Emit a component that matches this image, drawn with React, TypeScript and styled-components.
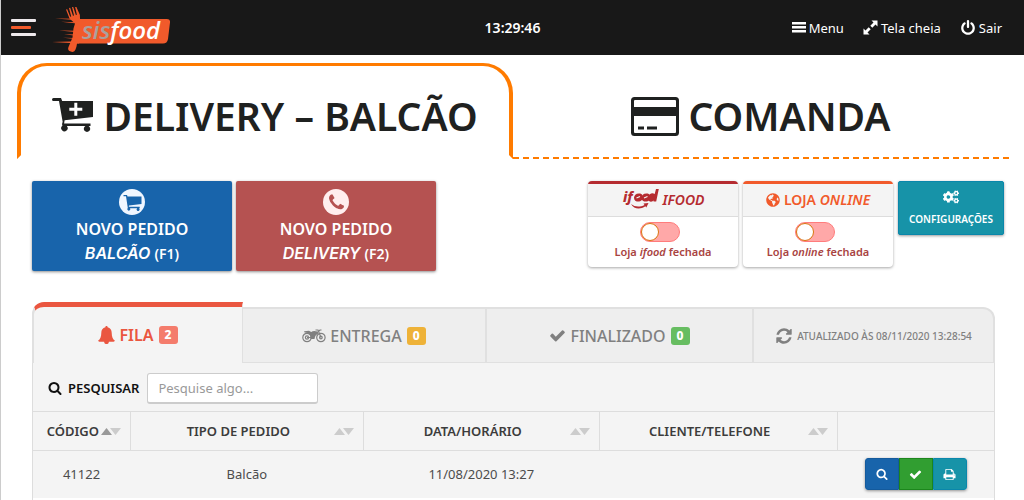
import React, { ReactNode } from "react";
import styled, { createGlobalStyle, css } from "styled-components";
import { FaCogs, FaGlobeAmericas } from "react-icons/fa";

const GlobalStyle = createGlobalStyle`
  *, *::before, *::after { box-sizing: border-box; }
  body {
    margin: 0;
    background: #fff;
    color: #444;
    font-family: "Noto Sans", "Open Sans", sans-serif;
    font-size: 13px;
    line-height: 20px;
  }
  button, input { font: inherit; }
  a { color: inherit; text-decoration: none; }
`;

/* ---------- icons ---------- */

const Glyph = styled.svg<{ $w: number; $h?: number }>`
  width: ${(p) => p.$w}px;
  height: ${(p) => p.$h ?? p.$w}px;
  flex: none;
  fill: currentColor;
`;

const paths = {
  check:
    "M1671 566q0 40-28 68l-724 724-136 136q-28 28-68 28t-68-28l-136-136-362-362q-28-28-28-68t28-68l136-136q28-28 68-28t68 28l294 295 656-657q28-28 68-28t68 28l136 136q28 28 28 68z",
  search:
    "M1216 832q0-185-131.5-316.5t-316.5-131.5-316.5 131.5-131.5 316.5 131.5 316.5 316.5 131.5 316.5-131.5 131.5-316.5zm512 832q0 52-38 90t-90 38q-54 0-90-38l-343-342q-179 124-399 124-143 0-273.5-55.5t-225-150-150-225-55.5-273.5 55.5-273.5 150-225 225-150 273.5-55.5 273.5 55.5 225 150 150 225 55.5 273.5q0 220-124 399l343 343q37 37 37 90z",
  refresh:
    "M1639 1056q0 5-1 7-64 268-268 434.5t-478 166.5q-146 0-282.5-55t-243.5-157l-129 129q-19 19-45 19t-45-19-19-45v-448q0-26 19-45t45-19h448q26 0 45 19t19 45-19 45l-137 137q71 66 161 102t187 36q134 0 250-65t186-179q11-17 53-117 8-23 30-23h192q13 0 22.5 9.5t9.5 22.5zm25-800v448q0 26-19 45t-45 19h-448q-26 0-45-19t-19-45 19-45l138-138q-148-137-349-137-134 0-250 65t-186 179q-11 17-53 117-8 23-30 23h-199q-13 0-22.5-9.5t-9.5-22.5v-7q65-268 270-434.5t480-166.5q146 0 284 55.5t245 156.5l130-129q19-19 45-19t45 19 19 45z",
  power:
    "M1664 896q0 156-61 298t-164 245-245 164-298 61-298-61-245-164-164-245-61-298q0-182 80.5-343t226.5-270q43-32 95.5-25t83.5 50q32 42 24.5 94.5t-49.5 84.5q-98 74-151.5 181t-53.5 228q0 104 40.5 198.5t109.5 163.5 163.5 109.5 198.5 40.5 198.5-40.5 163.5-109.5 109.5-163.5 40.5-198.5q0-121-53.5-228t-151.5-181q-42-32-49.5-84.5t24.5-94.5q31-43 84-50t95 25q146 109 226.5 270t80.5 343zm-640-768v640q0 52-38 90t-90 38-90-38-38-90v-640q0-52 38-90t90-38 90 38 38 90z",
  print:
    "M448 1536h896v-256h-896v256zm0-640h896v-384h-160q-40 0-68-28t-28-68v-160h-640v640zm1152 64q0-26-19-45t-45-19-45 19-19 45 19 45 45 19 45-19 19-45zm128 0v416q0 13-9.5 22.5t-22.5 9.5h-224v160q0 40-28 68t-68 28h-960q-40 0-68-28t-28-68v-160h-224q-13 0-22.5-9.5t-9.5-22.5v-416q0-79 56.5-135.5t135.5-56.5h64v-544q0-40 28-68t68-28h672q40 0 88 20t76 48l152 152q28 28 48 76t20 88v256h64q79 0 135.5 56.5t56.5 135.5z",
  phone:
    "M1600 1240q0 27-10 70.5t-21 68.5q-21 50-122 106-94 51-186 51-27 0-53-3.5t-57.5-12.5-47-14.5-55.5-20.5-49-18q-98-35-175-83-127-79-264-216t-216-264q-48-77-83-175-3-9-18-49t-20.5-55.5-14.5-47-12.5-57.5-3.5-53q0-92 51-186 56-101 106-122 25-11 68.5-21t70.5-10q14 0 21 3 18 6 53 76 11 19 30 54t35 63.5 31 53.5q3 4 17.5 25t21.5 35.5 7 28.5q0 20-28.5 50t-62 55-62 53-28.5 46q0 9 5 22.5t8.5 20.5 14 24 11.5 19q76 137 174 235t235 174q2 1 19 11.5t24 14 20.5 8.5 22.5 5q18 0 46-28.5t53-62 55-62 50-28.5q14 0 28.5 7t35.5 21.5 25 17.5q25 15 53.5 31t63.5 35 54 30q70 35 76 53 3 7 3 21z",
};

const Icon = ({ name, size }: { name: keyof typeof paths; size: number }) => (
  <Glyph $w={size} viewBox="0 0 1792 1792" aria-hidden="true">
    <path d={paths[name]} />
  </Glyph>
);

const BarsIcon = () => (
  <Glyph $w={14} viewBox="0 0 14 14" aria-hidden="true">
    <path d="M0 1h14v2.500H0zM0 5h14v2.500H0zM0 9h14v2.500H0z" />
  </Glyph>
);

const ExpandIcon = () => (
  <Glyph $w={15} viewBox="0 0 15 15" aria-hidden="true">
    <path d="M8.500 0.500h6v6l-2-2-3.200 3.200-2-2 3.200-3.200zM6.500 14.500H0.500V8.500l2 2 3.200-3.200 2 2-3.200 3.200z" />
  </Glyph>
);

const BellIcon = () => (
  <Glyph $w={17} $h={18} viewBox="0 0 17 18" aria-hidden="true">
    <path d="M8.500 0c.7 0 1.100.5 1.100 1.300C12.300 1.900 13.700 4 13.700 6.700c0 4.300 1.200 6.500 3.100 7.800 0 .7-.5 1.200-1.200 1.200h-4.700a2.400 2.400 0 0 1-4.800 0H1.400c-.7 0-1.200-.5-1.200-1.200 1.900-1.300 3.100-3.500 3.100-7.800C3.300 4 4.700 1.900 7.400 1.300 7.400.5 7.800 0 8.500 0z" />
  </Glyph>
);

const MotorcycleIcon = () => (
  <Glyph $w={24} $h={14} viewBox="0 0 24 14" aria-hidden="true">
    <g fill="none" stroke="currentColor" strokeWidth="1.200">
      <circle cx="5" cy="8.500" r="4.200" />
      <circle cx="5" cy="8.500" r="1.600" />
      <circle cx="18.900" cy="8.500" r="4.200" />
      <circle cx="18.900" cy="8.500" r="1.300" />
      <path d="M13.500 1h2.500l3 7.500M16.500 2.500l1.500-1.500h1.500M5 8.500h6.500c0-3 1-4.500 4.500-5.500" />
    </g>
    <path d="M2 2.200l5-.4 2.200 1.200c1.500-1.200 3.300-1.600 6.300-.4l.9 1.900c-2.500 1-3.400 2.700-3.900 5.500H8.600C8.800 7 7.800 4.800 5.600 4.100L2.600 3.400z" />
  </Glyph>
);

const CartPlusIcon = () => (
  <Glyph $w={42} $h={36} viewBox="0 0 42 36" aria-hidden="true">
    <path
      fillRule="evenodd"
      d="M1.500 0H9l1.200 3H41v16L12.600 22.300l-.5 3.200H38.500V28H36.600a3.200 3.200 0 1 1-3.200 0H14.800a3.200 3.200 0 1 1-4.400-.3c-.5-1.200-.3-2.500.3-3.600L7 3H1.500a1.500 1.500 0 0 1 0-3zM22.300 4.700v5h-5v3h5v5h3v-5h5v-3h-5v-5z"
    />
  </Glyph>
);

const CardIcon = () => (
  <Glyph $w={48} $h={39} viewBox="0 0 48 39" aria-hidden="true">
    <path
      fillRule="evenodd"
      d="M3.500 0h41A3.500 3.500 0 0 1 48 3.500v32a3.500 3.500 0 0 1-3.500 3.500h-41A3.500 3.500 0 0 1 0 35.500v-32A3.500 3.500 0 0 1 3.500 0zM4 3a1 1 0 0 0-1 1v6h42V4a1 1 0 0 0-1-1zM3 19v16a1 1 0 0 0 1 1h40a1 1 0 0 0 1-1V19zM7 29.500h6v3H7zM16 29.500h10v3H16z"
    />
  </Glyph>
);

const CartDisc = () => (
  <Glyph $w={26} viewBox="0 0 26 26" aria-hidden="true">
    <circle cx="13" cy="13" r="13" fill="#f0f6ff" />
    <path
      fill="#1864ab"
      d="M4.500 6H8l.5 1.500h14V15L10 16.500l-.2 1.300H20.700V19.200H20a1.500 1.500 0 1 1-1.800 0H11a1.500 1.500 0 1 1-2.200-.2L7 7.300H4.500z"
    />
  </Glyph>
);

const PhoneDisc = styled.span`
  display: flex;
  align-items: center;
  justify-content: center;
  width: 26px;
  height: 26px;
  border-radius: 50%;
  background: #ffeeee;
  color: #b55251;
`;

const SisfoodLogo = () => (
  <svg width="120" height="49" viewBox="0 0 120 49" role="img" aria-label="sisfood">
    <g fill="#f15a2b">
      <path d="M30 16h87q3.500 0 3 3.500l-2 16.500q-.8 4.500-5 4.500H27l-.5 3-1 3q-1 3-4 2.300-4.500-1-3-4.800l4-9.500 1-9 1.500-5-5.500-5-3.500-9 1.200-.3 3 7.500 1-.3-2.200-8.500 1.200-.2 2.800 8 1-.2-2-8.400 1.200-.1 2.700 8 1-.2-1.800-7.900h1.300l3.500 8z" />
      <path d="M5 15.500l24 .3v1.400zM11 18.800l16 .4v1.300zM9 27.500l17 .2v1.400zM14 31.300l12 .2v1.200zM13 34.700l13 .2v1.200zM2 39l27-.8v2.400z" />
    </g>
    <text
      x="32"
      y="36"
      fontFamily='"Open Sans", "Noto Sans", sans-serif'
      fontStyle="italic"
      fontWeight="600"
      fontSize="24"
    >
      <tspan fill="#aaa19d">sis</tspan>
      <tspan fill="#fff">food</tspan>
    </text>
  </svg>
);

const IfoodLogo = () => (
  <svg width="37" height="22" viewBox="0 0 37 22" overflow="visible" aria-hidden="true">
    <text
      x="1"
      y="13"
      fill="currentColor"
      fontFamily='"Noto Sans", sans-serif'
      fontStyle="italic"
      fontWeight="800"
      fontSize="14"
    >
      if
    </text>
    <g fill="currentColor">
      <ellipse cx="16.500" cy="8.500" rx="4.600" ry="4" transform="rotate(-25 16.500 8.500)" />
      <ellipse cx="24" cy="8.500" rx="4.600" ry="4" transform="rotate(-25 24 8.500)" />
      <path d="M34 0h2.800l-2.600 12.500h-2.700l.2-1c-3.500 2.800-6.500.4-5.500-3.200.9-3.600 4-5 6.500-3.200z" />
      <path d="M9 15c4 3.200 9 3.200 13.500.9l-1-1.500 5-.3-2.200 4.500-.9-1.300C18 20.800 12 20.200 9 15z" />
    </g>
    <path d="M14.500 9l3.500-1.500M22 9l3.500-1.500" stroke="#f4f4f4" strokeWidth="1.200" />
  </svg>
);

/* ---------- page frame ---------- */

const Page = styled.div`
  display: flex;
  flex-direction: column;
  min-height: 100vh;
  border-left: 1px solid #ccc;
`;

const TopBar = styled.header`
  display: grid;
  grid-template-columns: 1fr auto 1fr;
  align-items: center;
  height: 55px;
  padding: 0 10px;
  background: #181818;
  color: #fff;
`;

const Brand = styled.div`
  display: flex;
  align-items: center;
  gap: 14px;
`;

const MenuToggle = styled.button`
  display: flex;
  flex-direction: column;
  gap: 4px;
  width: 25px;
  padding: 0;
  border: 0;
  background: none;
`;

const ToggleLine = styled.span<{ $accent?: boolean }>`
  width: ${(p) => (p.$accent ? 20 : 25)}px;
  height: 3px;
  border-radius: 1px;
  background: ${(p) => (p.$accent ? "#f15a2b" : "#eee9ec")};
`;

const Clock = styled.time`
  font-size: 14px;
  font-weight: 600;
`;

const TopLinks = styled.nav`
  display: flex;
  justify-content: flex-end;
  gap: 19px;
  padding-right: 12px;
`;

const TopLink = styled.a`
  display: flex;
  align-items: center;
  gap: 3px;
  font-size: 13px;
`;

/* ---------- mode tabs ---------- */

const ModeTabs = styled.nav`
  display: grid;
  grid-template-columns: 1fr 1fr;
  margin: 8px 15px 0 16px;
`;

const ModeTab = styled.a<{ $active?: boolean }>`
  display: flex;
  align-items: center;
  justify-content: center;
  gap: 9px;
  height: 96px;
  padding-top: 12px;
  color: #1f2120;
  font-size: 39px;
  font-weight: 600;
  line-height: 48px;
  white-space: nowrap;
  ${(p) =>
    p.$active
      ? css`
          padding-top: 10px;
          border: 4px solid #ff7b00;
          border-top-width: 3px;
          border-bottom: 4px solid transparent;
          border-radius: 30px 30px 0 0;
        `
      : css`
          border-bottom: 2px dashed #ff7b00;
        `}
`;

/* ---------- action strip ---------- */

const Actions = styled.section`
  display: flex;
  align-items: flex-start;
  justify-content: space-between;
  margin: 22px 20px 0 31px;
`;

const ActionGroup = styled.div<{ $gap: number }>`
  display: flex;
  align-items: flex-start;
  gap: ${(p) => p.$gap}px;
`;

const OrderButton = styled.button<{ $color: string }>`
  display: flex;
  flex-direction: column;
  align-items: center;
  width: 200px;
  height: 90px;
  padding: 8px 0 0;
  border: 0;
  border-radius: 2px;
  background: ${(p) => p.$color};
  box-shadow: 0 1px 3px rgba(0, 0, 0, 0.45);
  color: #fff;
  font-size: 16px;
  font-weight: 600;
  line-height: 24px;
`;

const OrderLine = styled.span`
  margin-top: 2px;
  & + & { margin-top: 0; }
  em { font-family: Inter, "Noto Sans", sans-serif; }
  small { font-size: 14px; }
`;

const StoreCard = styled.article<{ $color: string }>`
  width: 150px;
  height: 86px;
  border-top: 3px solid ${(p) => p.$color};
  border-radius: 4px;
  background: #fff;
  box-shadow: 0 1px 3px rgba(0, 0, 0, 0.35);
  text-align: center;
`;

const StoreTitle = styled.h2<{ $color: string }>`
  display: flex;
  align-items: center;
  justify-content: center;
  gap: 4px;
  height: 33px;
  margin: 0;
  border-bottom: 1px solid #ddd;
  background: #f4f4f4;
  color: ${(p) => p.$color};
  font-size: 14px;
  font-weight: 600;
`;

const StoreState = styled.label`
  display: flex;
  flex-direction: column;
  align-items: center;
  padding-top: 5px;
  color: #a94442;
  font-size: 11px;
  font-weight: 600;
`;

const Switch = styled.input`
  appearance: none;
  width: 40px;
  height: 20px;
  margin: 0 6px 0 0;
  border: 1px solid #ff7c7c;
  border-radius: 10px;
  background: #ffa8a8;
  &::before {
    content: "";
    display: block;
    width: 18px;
    height: 18px;
    border: 1px solid #d9760f;
    border-radius: 50%;
    background: #fff;
  }
`;

const ConfigButton = styled.button`
  display: flex;
  flex-direction: column;
  align-items: center;
  gap: 4px;
  width: 106px;
  height: 54px;
  padding: 7px 0 0;
  border: 1px solid #0a87ab;
  border-radius: 2px;
  background: #1793a8;
  box-shadow: 0 1px 3px rgba(0, 0, 0, 0.4);
  color: #fff;
  font-size: 10px;
  font-weight: 600;
  line-height: 20px;
`;

/* ---------- orders panel ---------- */

const Panel = styled.section`
  display: flex;
  flex: 1;
  flex-direction: column;
  margin: 31px 29px 0 31px;
`;

const StatusTabs = styled.nav`
  display: grid;
  grid-template-columns: 211fr 244fr 267fr 241fr;
  align-items: end;
`;

const StatusTab = styled.a<{ $active?: boolean; $last?: boolean; $small?: boolean }>`
  display: flex;
  align-items: center;
  justify-content: center;
  gap: 4px;
  height: 56px;
  border: 0 solid #e0e0e0;
  border-width: 2px 2px 1px 0;
  background: #eee;
  color: #808080;
  font-size: ${(p) => (p.$small ? 10 : 16)}px;
  font-weight: 500;
  white-space: nowrap;
  ${(p) => p.$last && "border-top-right-radius: 12px;"}
  ${(p) =>
    p.$active &&
    css`
      height: 61px;
      border-width: 5px 1px 0 2px;
      border-top-color: #ea5640;
      border-top-left-radius: 12px;
      background: #f4f4f4;
      color: #ea5640;
      font-weight: 600;
    `}
`;

const Badge = styled.span<{ $color: string }>`
  min-width: 19px;
  margin-left: 1px;
  padding: 0 6px;
  border-radius: 3px;
  background: ${(p) => p.$color};
  color: #fff;
  font-size: 12px;
  font-weight: 800;
  line-height: 18px;
  text-align: center;
`;

const PanelBody = styled.div`
  flex: 1;
  border: solid #ddd;
  border-width: 0 1px;
`;

const SearchBar = styled.div`
  display: flex;
  align-items: center;
  gap: 8px;
  height: 48px;
  padding: 2px 15px 0;
  background: #f4f4f4;
`;

const SearchLabel = styled.label`
  display: flex;
  align-items: center;
  gap: 6px;
  color: #111;
  font-size: 13px;
  font-weight: 600;
`;

const SearchInput = styled.input`
  width: 171px;
  height: 31px;
  padding: 0 10px;
  border: 1px solid #ccc;
  border-bottom-width: 2px;
  border-radius: 3px;
  background: #fff;
  color: #444;
  font-size: 13px;
  &::placeholder { color: #999; opacity: 1; }
`;

const OrdersTable = styled.table`
  width: 100%;
  table-layout: fixed;
  border-collapse: collapse;
  background: #f4f4f4;
  text-align: center;
`;

const HeadCell = styled.th`
  height: 39px;
  padding: 0 9px 0 12px;
  border: solid #ddd;
  border-width: 1px 1px 1px 0;
  color: #3c3c3c;
  font-size: 13px;
  font-weight: 600;
  white-space: nowrap;
  &:last-child { border-right: 0; }
`;

const HeadContent = styled.span`
  display: flex;
  align-items: center;
`;

const HeadTitle = styled.span`
  flex: 1;
`;

const DataCell = styled.td`
  height: 47px;
  padding: 0;
  color: #4c4c4c;
`;

const RowActions = styled.div`
  display: inline-flex;
  vertical-align: middle;
  border-radius: 3px;
  box-shadow: 0 1px 3px rgba(0, 0, 0, 0.4);
`;

const RowButton = styled.button<{ $color: string; $edge: string }>`
  display: flex;
  align-items: center;
  justify-content: center;
  width: 34px;
  height: 32px;
  padding: 0;
  border: 1px solid ${(p) => p.$edge};
  background: ${(p) => p.$color};
  color: #fff;
  &:first-child { border-radius: 3px 0 0 3px; }
  &:last-child { border-radius: 0 3px 3px 0; }
`;

const SortMark = ({ ascending }: { ascending?: boolean }) => (
  <svg width="20" height="7" viewBox="0 0 20 7" aria-hidden="true">
    <path d="M0 7L5.500 0 11 7z" fill={ascending ? "#999" : "#ccc"} />
    <path d="M9 0h11l-5.500 7z" fill="#ccc" />
  </svg>
);

const Column = ({ children, ascending }: { children: ReactNode; ascending?: boolean }) => (
  <HeadCell scope="col" aria-sort={ascending ? "ascending" : undefined}>
    <HeadContent>
      <HeadTitle>{children}</HeadTitle>
      <SortMark ascending={ascending} />
    </HeadContent>
  </HeadCell>
);

export default function App() {
  return (
    <Page>
      <GlobalStyle />
      <TopBar>
        <Brand>
          <MenuToggle type="button" aria-label="Abrir menu">
            <ToggleLine />
            <ToggleLine $accent />
            <ToggleLine />
          </MenuToggle>
          <SisfoodLogo />
        </Brand>
        <Clock>13:29:46</Clock>
        <TopLinks>
          <TopLink href="#menu"><BarsIcon />Menu</TopLink>
          <TopLink href="#tela-cheia"><ExpandIcon />Tela cheia</TopLink>
          <TopLink href="#sair"><Icon name="power" size={16} />Sair</TopLink>
        </TopLinks>
      </TopBar>

      <ModeTabs>
        <ModeTab href="#delivery" $active><CartPlusIcon />DELIVERY – BALCÃO</ModeTab>
        <ModeTab href="#comanda"><CardIcon />COMANDA</ModeTab>
      </ModeTabs>

      <Actions>
        <ActionGroup $gap={4}>
          <OrderButton type="button" $color="#1864ab">
            <CartDisc />
            <OrderLine>NOVO PEDIDO</OrderLine>
            <OrderLine><em>BALCÃO</em> <small>(F1)</small></OrderLine>
          </OrderButton>
          <OrderButton type="button" $color="#b55251">
            <PhoneDisc><Icon name="phone" size={19} /></PhoneDisc>
            <OrderLine>NOVO PEDIDO</OrderLine>
            <OrderLine><em>DELIVERY</em> <small>(F2)</small></OrderLine>
          </OrderButton>
        </ActionGroup>
        <ActionGroup $gap={5}>
          <StoreCard $color="#b52b30">
            <StoreTitle $color="#b52b30"><IfoodLogo /><em>IFOOD</em></StoreTitle>
            <StoreState>
              <Switch type="checkbox" />
              <span>Loja <em>ifood</em> fechada</span>
            </StoreState>
          </StoreCard>
          <StoreCard $color="#f15a2b">
            <StoreTitle $color="#f15a2b">
              <FaGlobeAmericas size={14} />
              <span>LOJA <em>ONLINE</em></span>
            </StoreTitle>
            <StoreState>
              <Switch type="checkbox" />
              <span>Loja <em>online</em> fechada</span>
            </StoreState>
          </StoreCard>
          <ConfigButton type="button"><FaCogs size={16} />CONFIGURAÇÕES</ConfigButton>
        </ActionGroup>
      </Actions>

      <Panel>
        <StatusTabs>
          <StatusTab href="#fila" $active><BellIcon />FILA<Badge $color="#f47c6c">2</Badge></StatusTab>
          <StatusTab href="#entrega"><MotorcycleIcon />ENTREGA<Badge $color="#eeb238">0</Badge></StatusTab>
          <StatusTab href="#finalizado"><Icon name="check" size={17} />FINALIZADO<Badge $color="#67bd61">0</Badge></StatusTab>
          <StatusTab href="#atualizar" $last $small><Icon name="refresh" size={18} />ATUALIZADO ÀS 08/11/2020 13:28:54</StatusTab>
        </StatusTabs>
        <PanelBody>
          <SearchBar>
            <SearchLabel htmlFor="pesquisa"><Icon name="search" size={14} />PESQUISAR</SearchLabel>
            <SearchInput id="pesquisa" type="text" placeholder="Pesquise algo..." />
          </SearchBar>
          <OrdersTable>
            <colgroup>
              <col width="10.1%" />
              <col width="24.3%" />
              <col width="24.5%" />
              <col width="24.8%" />
              <col width="16.3%" />
            </colgroup>
            <thead>
              <tr>
                <Column ascending>CÓDIGO</Column>
                <Column>TIPO DE PEDIDO</Column>
                <Column>DATA/HORÁRIO</Column>
                <Column>CLIENTE/TELEFONE</Column>
                <HeadCell />
              </tr>
            </thead>
            <tbody>
              <tr>
                <DataCell>41122</DataCell>
                <DataCell>Balcão</DataCell>
                <DataCell>11/08/2020 13:27</DataCell>
                <DataCell />
                <DataCell>
                  <RowActions>
                    <RowButton type="button" aria-label="Ver pedido" $color="#1864ab" $edge="#145a9c"><Icon name="search" size={12} /></RowButton>
                    <RowButton type="button" aria-label="Finalizar pedido" $color="#319e31" $edge="#1c861c"><Icon name="check" size={13} /></RowButton>
                    <RowButton type="button" aria-label="Imprimir pedido" $color="#1793a8" $edge="#0a87ab"><Icon name="print" size={13} /></RowButton>
                  </RowActions>
                </DataCell>
              </tr>
            </tbody>
          </OrdersTable>
        </PanelBody>
      </Panel>
    </Page>
  );
}
